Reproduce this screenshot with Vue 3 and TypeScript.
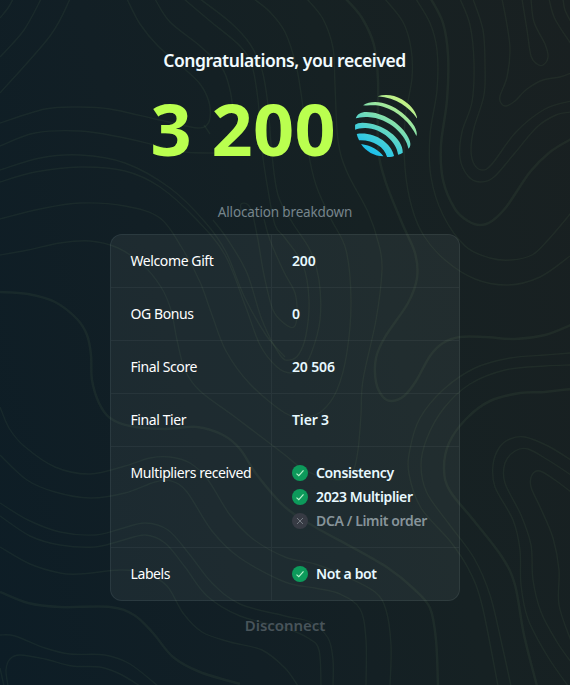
<script setup lang="ts">
type Point = [number, number]
interface Contour { bold: boolean; d: string }
interface Mark { label: string; ok: boolean }
interface Row { name: string; value?: string; marks?: Mark[] }

const rows: Row[] = [
  { name: 'Welcome Gift', value: '200' },
  { name: 'OG Bonus', value: '0' },
  { name: 'Final Score', value: '20 506' },
  { name: 'Final Tier', value: 'Tier 3' },
  {
    name: 'Multipliers received',
    marks: [
      { label: 'Consistency', ok: true },
      { label: '2023 Multiplier', ok: true },
      { label: 'DCA / Limit order', ok: false },
    ],
  },
  { name: 'Labels', marks: [{ label: 'Not a bot', ok: true }] },
]

// Smooth curve through the given points (Catmull-Rom as cubic Béziers).
function smooth(source: string): string {
  const p: Point[] = source.split(' ').map((s) => s.split(',').map(Number) as Point)
  let d = `M${p[0][0]} ${p[0][1]}`
  for (let i = 0; i < p.length - 1; i++) {
    const a = p[Math.max(i - 1, 0)]
    const b = p[i]
    const c = p[i + 1]
    const e = p[Math.min(i + 2, p.length - 1)]
    const t = (n: number) => n.toFixed(1)
    d += `C${t(b[0] + (c[0] - a[0]) / 6)} ${t(b[1] + (c[1] - a[1]) / 6)} ${t(c[0] - (e[0] - b[0]) / 6)} ${t(c[1] - (e[1] - b[1]) / 6)} ${c[0]} ${c[1]}`
  }
  return d
}

const thin = [
  '13,-1 8,8 0,18',
  '41,-1 24,30 0,57',
  '70,-1 50,36 0,93',
  '127,-1 140,24 158,46 180,65 200,84 209,102 210,118 206,126 198,128 186,126 155,119 110,109 80,107 45,109 0,123',
  '204,125 210,134',
  '155,-1 170,22 200,46 222,68 230,90 233,110',
  '184,-1 210,21 240,46 252,66 258,100 262,150 268,190 275,225 285,238 303,265 309,300 306,335 299,354 290,360 280,355 262,320 247,273 228,240 213,220',
  '200,-1 230,22 250,44 262,70 268,105 272,155 278,195 292,222 310,250 319,280 320,320 311,354 302,368 291,373 277,367 260,345 245,305 225,255 197,220 160,187 125,171 80,167 35,172 0,182',
  '254,-1 270,12 285,32 296,65 302,100 308,150 316,185 331,219 346,250 351,300 347,352 337,390 322,411 305,417 285,413 250,384 226,351 212,315 200,282 182,248 160,218 125,206 80,203 40,209 0,219',
  '0,146 35,133 80,131 120,137 155,145 185,152 215,153',
  '0,170 40,158 80,155 125,163 170,188 205,222 226,252 244,296 266,335 285,357',
  '241,210 241,204 247,204 252,212 258,240 264,275 273,310 285,324 294,327 297,315 295,293 284,272 270,240 264,219',
  '307,-1 323,19 333,48 335,85 338,140 347,172 368,212 379,245 382,270 376,320 363,380 361,415 358,450 353,472 345,479 325,478 303,469 285,455 272,445',
  '385,-1 403,22 411,48 412,78 405,120 405,168 412,208 424,236 445,260 475,279 508,285 540,277 570,256',
  '416,-1 430,23 437,50 437,90 430,135 431,177 443,215 465,246 490,258 511,260 532,255 548,240 571,213',
  '460,-1 470,25 474,63 472,102 462,132 460,158 468,176 480,182 494,177 514,154 537,127 556,115 571,112',
  '473,-1 483,30 485,65 484,95 474,128 471,150 474,164 482,170 492,164 516,132 545,109 571,101',
  '502,-1 507,25 510,50 507,77 500,96 501,103 506,106 515,101 527,89 543,80 560,77 571,73',
  '522,-1 527,30 531,56 537,64 543,65 548,57 545,44 534,22 531,-1',
  '549,-1 555,19 571,44',
  '563,-1 565,10 571,22',
  '0,255 28,250 60,243 90,241 118,248 143,265 161,287 171,310 177,340 185,370 200,391 235,417 272,445',
  '0,407 9,428 24,446 55,467 90,474 125,466 150,458 170,457 190,463 208,480 230,515 253,539 285,557 315,564 345,576 375,592 386,610 391,645 390,686',
  '0,455 27,480 55,492 90,498 125,493 155,482 171,481 187,492 212,531 240,558 285,582 315,588 340,594 360,609 366,640 366,686',
  '0,503 28,520 60,532 95,535 120,529 145,523 168,530 190,555 212,583 240,604 285,616 310,622 328,638 333,660 333,686',
  '0,516 30,536 60,545 95,547 120,541 145,535 165,543 185,567 207,596 240,616 285,628 308,638 319,650 321,686',
  '0,547 30,564 60,573 80,574 120,570 145,573 167,586 183,613 202,632 230,642 262,650 285,668 298,686',
  '0,635 15,636 45,648 70,654 105,655 130,664 158,686',
  '8,686 6,670 10,659 20,655 45,659 72,666 100,667 120,674 140,686',
  '0,668 4,686',
  '571,353 545,355 510,358 475,368 444,389 420,418 410,449 409,474 421,508 450,541 469,570 482,605 498,686',
  '571,365 545,366 505,370 470,384 444,408 427,438 421,465 427,493 449,524 474,558 490,595 502,645 511,686',
  '571,460 548,446 525,437 510,439 499,448 493,465 495,487 513,520 520,550 521,585 528,619 548,657 571,690',
  '571,475 548,460 528,449 515,451 505,463 505,483 521,515 531,545 533,580 541,612 557,642 571,662',
  '571,492 555,480 540,471 532,475 531,487 541,509 553,538 559,570 559,605 571,641',
]

const bold = [
  '346,-1 362,18 374,45 378,80 378,145 385,180 402,223 415,253 417,278 408,303 385,337 376,358 376,382 383,397 392,401 404,396 416,381 430,356 443,343 460,337 485,337 515,339 545,335 571,325',
  '431,-1 443,23 448,55 447,100 441,145 443,180 455,209 468,221 480,225 492,221 507,206 530,172 550,152 571,139',
  '0,292 28,294 55,302 77,319 87,335 91,355 92,380 99,403 110,418 130,426 165,429 197,427 223,435 240,449 257,475 285,507 315,527 350,546 388,568 414,589 430,608 436,640 438,686',
  '0,592 28,603 60,607 110,607 134,615 153,633 173,657 200,672 240,684',
  '571,389 545,392 520,393 490,401 466,419 449,443 444,469 450,491 475,522 502,557 515,585 524,635 537,686',
]

const contours: Contour[] = [
  ...thin.map((s) => ({ bold: false, d: smooth(s) })),
  ...bold.map((s) => ({ bold: true, d: smooth(s) })),
]
</script>

<template>
  <main class="page">
    <svg class="topo" viewBox="0 0 570 685" aria-hidden="true">
      <path v-for="(c, i) in contours" :key="i" :d="c.d" :class="{ bold: c.bold }" />
    </svg>
    <h1 class="title"><span>Congratulations, you received</span></h1>
    <div class="amount">
      <span class="number">3 200</span>
      <svg class="logo" viewBox="0 0 187 186" aria-hidden="true">
        <defs>
          <linearGradient id="sphere" gradientUnits="userSpaceOnUse" x1="38" y1="180" x2="140" y2="12">
            <stop offset="0.05" stop-color="#1cc0ec" />
            <stop offset="0.3" stop-color="#44cfd8" />
            <stop offset="0.6" stop-color="#81dfae" />
            <stop offset="1" stop-color="#c7f284" />
          </linearGradient>
        </defs>
        <g fill="url(#sphere)">
          <path d="M68 4C90-3 118 0 140 13C167 29 182 48 187 72C163 38 126 9 68 4Z" />
          <path d="M24 31C55 10 105 24 141 53C171 77 190 105 184 123C167 84 128 48 84 35C60 28 45 33 24 31Z" />
          <path d="M2 70C6 58 16 51 34 51C83 51 133 84 155 119C168 140 169 153 160 161C154 122 103 69 38 66C22 65 10 68 2 70Z" />
          <path d="M0 104V89Q7 83 22 83C82 83 145 130 143 173Q137 178 129 179C126 143 82 100 30 99C16 99 8 102 0 104Z" />
          <path d="M5 117C55 109 108 142 117 183Q107 187 96 186C88 155 52 134 12 136Q7 127 5 117Z" />
          <path d="M18 147C46 151 72 165 85 184C58 184 32 169 18 147Z" />
        </g>
      </svg>
    </div>
    <p class="caption"><span>Allocation breakdown</span></p>
    <section class="card">
      <div v-for="row in rows" :key="row.name" class="row">
        <div class="name"><span>{{ row.name }}</span></div>
        <div class="cell">
          <span v-if="row.value" class="value">{{ row.value }}</span>
          <div v-for="m in row.marks" :key="m.label" class="mark" :class="{ off: !m.ok }">
            <svg class="badge" viewBox="0 0 16 16" aria-hidden="true">
              <circle cx="8" cy="8" r="8" />
              <path v-if="m.ok" d="M4.5 8.6L6.8 10.7L11.5 5.4" />
              <path v-else d="M5 5L11 11M11 5L5 11" />
            </svg>
            <span>{{ m.label }}</span>
          </div>
        </div>
      </div>
    </section>
    <button class="disconnect" type="button">Disconnect</button>
  </main>
</template>

<style>
body { background: #131f25; }
</style>

<style scoped>
.page {
  position: relative;
  box-sizing: border-box;
  width: 570px;
  height: 685px;
  padding-top: 46px;
  overflow: hidden;
  display: flex;
  flex-direction: column;
  align-items: center;
  color: #fff;
  font-family: "Noto Sans", "Open Sans", sans-serif;
  background: linear-gradient(75deg, #0d1d26 0%, #121f25 35%, #162123 65%, #192021 100%);
}
.topo {
  position: absolute;
  inset: 0;
  width: 570px;
  height: 685px;
  fill: none;
  stroke: rgba(180, 235, 150, 0.055);
  stroke-width: 1.4;
}
.topo .bold { stroke-width: 2.5; }
.title, .amount, .caption, .card, .disconnect { position: relative; }
.title {
  margin: 0;
  padding-right: 1px;
  font-size: 17.5px;
  line-height: 28px;
  font-weight: 600;
  letter-spacing: -0.44px;
  white-space: nowrap;
  color: #f1fbff;
}
.amount {
  display: flex;
  align-items: center;
  gap: 19px;
  height: 72px;
  margin-top: 18px;
  padding-right: 2px;
}
.number {
  font-size: 72px;
  line-height: 72px;
  font-weight: 700;
  letter-spacing: 0.3px;
  word-spacing: 0.5px;
  color: #baff4f;
  white-space: nowrap;
}
.logo { width: 62.5px; height: 62px; margin-top: -4px; }
.caption {
  margin: 38px 0 0;
  font-size: 13.5px;
  line-height: 20px;
  letter-spacing: -0.15px;
  color: #76858c;
  white-space: nowrap;
}
.card {
  box-sizing: border-box;
  width: 350px;
  margin-top: 12px;
  border: 1px solid rgba(232, 249, 255, 0.07);
  border-radius: 12px;
  background: rgba(232, 249, 255, 0.055);
  font-size: 14px;
  line-height: 24px;
  overflow: hidden;
}
.row { display: flex; }
.row + .row { border-top: 1px solid rgba(232, 249, 255, 0.05); }
.name {
  box-sizing: border-box;
  width: 161px;
  padding: 14px 0 14px 19.5px;
  border-right: 1px solid rgba(232, 249, 255, 0.05);
  white-space: nowrap;
  letter-spacing: -0.4px;
}
.cell {
  padding: 14px 0 14px 20px;
  font-weight: 600;
  white-space: nowrap;
  color: #e8f9ff;
}
.value { display: block; letter-spacing: -0.15px; }
.mark { display: flex; align-items: center; gap: 8px; letter-spacing: -0.37px; }
.badge { width: 16px; height: 16px; flex: none; }
.badge circle { fill: #0d9a5b; }
.badge path { fill: none; stroke: #b9f3ce; stroke-width: 1.2; }
.off { color: #87949a; }
.off .badge circle { fill: #373b44; }
.off .badge path { stroke: #747b82; stroke-width: 1; }
.disconnect {
  margin: 12px 0 0;
  padding: 0;
  border: 0;
  background: none;
  font: 600 15px/24px "Noto Sans", "Open Sans", sans-serif;
  letter-spacing: -0.05px;
  color: #48545a;
}
</style>
